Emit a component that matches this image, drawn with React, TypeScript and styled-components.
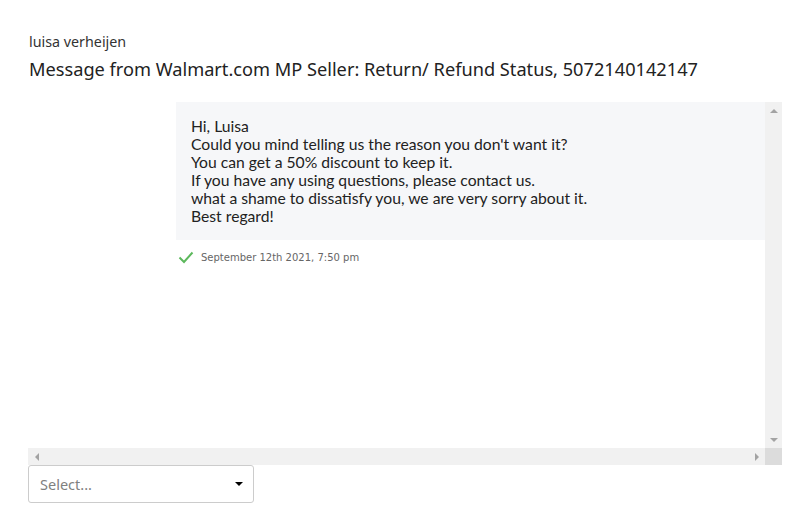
import React from "react";
import styled, { createGlobalStyle } from "styled-components";

const Global = createGlobalStyle`
  html, body { margin: 0; padding: 0; background: #fff; }
  body { font-family: "Noto Sans", "Open Sans", sans-serif; color: #333; }
`;

const Page = styled.div`
  width: 792px;
  height: 512px;
  box-sizing: border-box;
  padding: 32px 10px 0 28px;
  display: flex;
  flex-direction: column;
`;

const Sender = styled.div`
  font-size: 14.3px;
  line-height: 20px;
  color: #333;
  padding-left: 1px;
`;

const Subject = styled.h1`
  margin: 4px 0 0;
  font-size: 18.2px;
  font-weight: 400;
  line-height: 26px;
  color: #222;
  padding-left: 1px;
`;

const ScrollFrame = styled.div`
  margin-top: 20px;
  width: 754px;
  height: 363px;
  display: grid;
  grid-template-columns: 1fr 17px;
  grid-template-rows: 1fr 17px;
`;

const Content = styled.div`
  overflow: hidden;
  display: flex;
  flex-direction: column;
`;

const Bubble = styled.div`
  margin-left: 148px;
  background: #f6f7f9;
  padding: 15px 15px 15px;
  font-family: "Lato", "Noto Sans", sans-serif;
  font-size: 15.7px;
  line-height: 18px;
  color: #222;
`;

const Line = styled.div``;

const Meta = styled.div`
  display: flex;
  align-items: center;
  gap: 7px;
  margin: 11px 0 0 150px;
  font-family: "DejaVu Sans", sans-serif;
  font-size: 10px;
  color: #666;
`;

const VBar = styled.div`
  background: #f1f1f1;
  display: flex;
  flex-direction: column;
  justify-content: space-between;
  align-items: center;
`;

const HBar = styled.div`
  background: #f1f1f1;
  display: flex;
  justify-content: space-between;
  align-items: center;
`;

const Corner = styled.div`
  background: #dcdcdc;
`;

const ArrowBtn = styled.div`
  width: 17px;
  height: 17px;
  display: flex;
  align-items: center;
  justify-content: center;
`;

const SelectBox = styled.div`
  width: 226px;
  height: 38px;
  box-sizing: border-box;
  border: 1px solid #ccc;
  border-radius: 3px;
  display: flex;
  align-items: center;
  justify-content: space-between;
  padding: 0 10px 0 11px;
  font-size: 14.5px;
  color: #808080;
  background: #fff;
`;

const Arrow = ({ dir, color = "#a3a3a3" }: { dir: "up" | "down" | "left" | "right"; color?: string }) => {
  const pts = {
    up: "0,4 4,0 8,4",
    down: "0,0 8,0 4,4",
    left: "4,0 4,8 0,4",
    right: "0,0 0,8 4,4",
  }[dir];
  const vertical = dir === "up" || dir === "down";
  return (
    <svg width={vertical ? 8 : 4} height={vertical ? 4 : 8} viewBox={vertical ? "0 0 8 4" : "0 0 4 8"}>
      <polygon points={pts} fill={color} />
    </svg>
  );
};

const Check = () => (
  <svg width="16" height="13" viewBox="0 0 16 13">
    <polyline points="1.5,6.5 6,11 14.5,1.5" fill="none" stroke="#5cb85c" strokeWidth="2" />
  </svg>
);

const lines = [
  "Hi, Luisa",
  "Could you mind telling us the reason you don't want it?",
  "You can get a 50% discount to keep it.",
  "If you have any using questions, please contact us.",
  "what a shame to dissatisfy you, we are very sorry about it.",
  "Best regard!",
];

export default function App() {
  return (
    <>
      <Global />
      <Page>
        <Sender>luisa verheijen</Sender>
        <Subject>Message from Walmart.com MP Seller: Return/ Refund Status, 5072140142147</Subject>
        <ScrollFrame>
          <Content>
            <Bubble>
              {lines.map((l) => (
                <Line key={l}>{l}</Line>
              ))}
            </Bubble>
            <Meta>
              <Check />
              <span>September 12th 2021, 7:50 pm</span>
            </Meta>
          </Content>
          <VBar>
            <ArrowBtn><Arrow dir="up" /></ArrowBtn>
            <ArrowBtn><Arrow dir="down" /></ArrowBtn>
          </VBar>
          <HBar>
            <ArrowBtn><Arrow dir="left" /></ArrowBtn>
            <ArrowBtn><Arrow dir="right" /></ArrowBtn>
          </HBar>
          <Corner />
        </ScrollFrame>
        <SelectBox>
          <span>Select...</span>
          <Arrow dir="down" color="#000" />
        </SelectBox>
      </Page>
    </>
  );
}
